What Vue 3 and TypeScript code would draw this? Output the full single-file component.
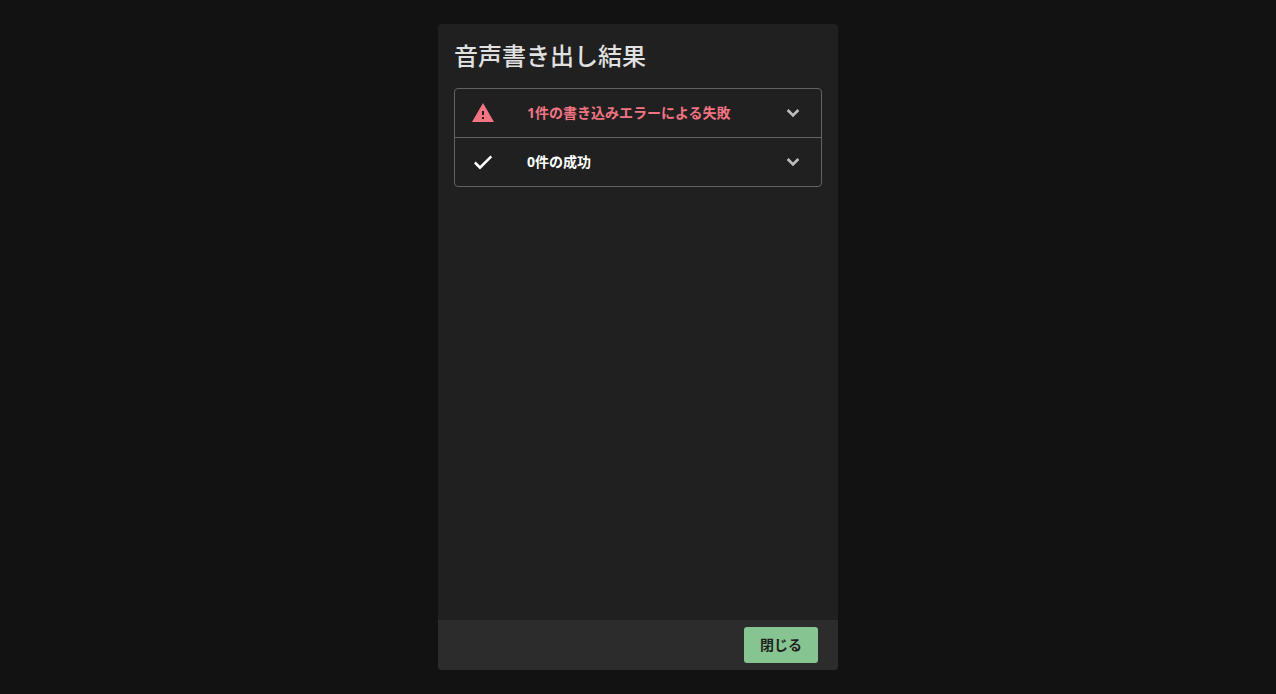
<script setup lang="ts">
import { ref } from 'vue'

interface ResultGroup {
  id: string
  label: string
  kind: 'error' | 'success'
  icon: string
}

const groups: ResultGroup[] = [
  { id: 'write-error', label: '1件の書き込みエラーによる失敗', kind: 'error', icon: 'M1 21h22L12 2 1 21zm12-3h-2v-2h2v2zm0-4h-2v-4h2v4z' },
  { id: 'success', label: '0件の成功', kind: 'success', icon: 'M9 15.8 4.8 11.6 3 13.4 9 19.4 21.2 7.2 19.4 5.4z' },
]

const open = ref<string | null>(null)
const visible = ref(true)

function toggle(id: string): void {
  open.value = open.value === id ? null : id
}
</script>

<template>
  <div class="backdrop">
    <section v-if="visible" class="dialog" role="dialog" aria-modal="true" aria-labelledby="dialog-title">
      <div class="body">
        <h1 id="dialog-title" class="title">音声書き出し結果</h1>
        <ul class="list">
          <li v-for="group in groups" :key="group.id" class="item">
            <button
              type="button"
              class="row"
              :class="group.kind"
              :aria-expanded="open === group.id"
              @click="toggle(group.id)"
            >
              <svg class="icon" viewBox="0 0 24 24" aria-hidden="true"><path :d="group.icon" /></svg>
              <span class="label">{{ group.label }}</span>
              <svg class="chevron" :class="{ flipped: open === group.id }" viewBox="0 0 24 24" aria-hidden="true">
                <path d="M7.6 8 12 12.4 16.4 8 18.3 9.9 12 16.2 5.7 9.9z" />
              </svg>
            </button>
          </li>
        </ul>
      </div>
      <footer class="actions">
        <button type="button" class="close" @click="visible = false">閉じる</button>
      </footer>
    </section>
  </div>
</template>

<style>
body {
  background: #121212;
}
</style>

<style scoped>
.backdrop {
  box-sizing: border-box;
  min-height: 100vh;
  padding: 24px;
  display: flex;
  justify-content: center;
  background: #121212;
  font-family: "Open Sans", "Noto Sans CJK JP", sans-serif;
}

.dialog {
  width: 100%;
  max-width: 400px;
  display: flex;
  flex-direction: column;
  overflow: hidden;
  border-radius: 4px;
  background: #202020;
  color: #e1e1e1;
}

.body {
  flex: 1;
  padding: 16px;
}

.title {
  margin: 0 0 16px;
  font-size: 24px;
  line-height: 32px;
  font-weight: 500;
}

.list {
  margin: 0;
  padding: 0;
  list-style: none;
  border: 1px solid #636363;
  border-radius: 4px;
}

.item + .item {
  border-top: 1px solid #636363;
}

.row {
  box-sizing: border-box;
  width: 100%;
  min-height: 48px;
  padding: 8px 16px;
  display: flex;
  align-items: center;
  border: 0;
  background: transparent;
  font-family: inherit;
  font-size: 14px;
  font-weight: 700;
  line-height: 20px;
  text-align: left;
  cursor: pointer;
}

.error {
  color: #f27483;
}

.success {
  color: #ffffff;
}

.icon {
  flex: none;
  width: 24px;
  height: 24px;
  margin-right: 32px;
  fill: currentColor;
}

.label {
  flex: 1;
}

.chevron {
  flex: none;
  width: 24px;
  height: 24px;
  fill: #bcbcbc;
}

.flipped {
  transform: rotate(180deg);
}

.actions {
  padding: 7px 20px;
  display: flex;
  justify-content: flex-end;
  background: #2c2c2c;
}

.close {
  min-height: 36px;
  padding: 4px 16px;
  border: 0;
  border-radius: 3px;
  background: #86c591;
  color: #1f1f1f;
  font-family: inherit;
  font-size: 14px;
  font-weight: 700;
  line-height: 24px;
  cursor: pointer;
}
</style>
